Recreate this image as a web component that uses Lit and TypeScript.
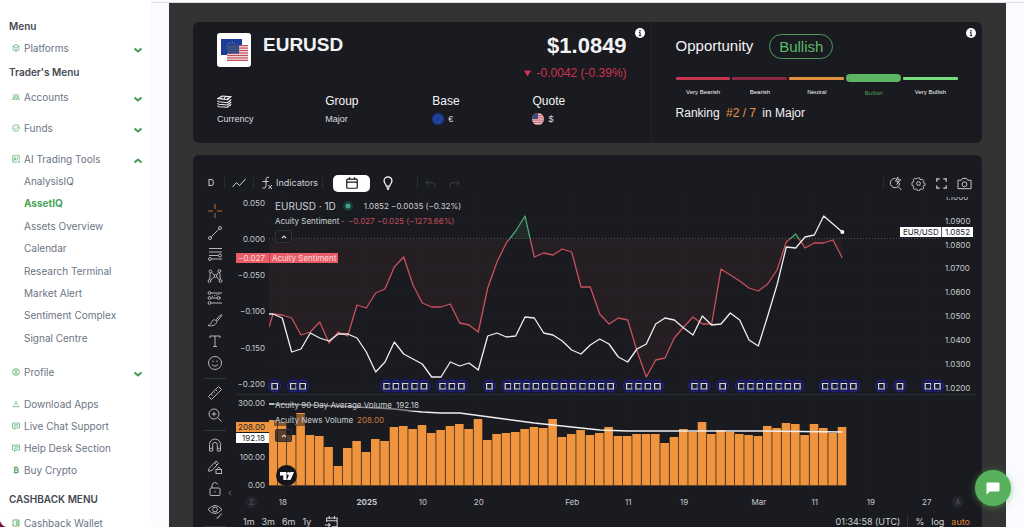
import { LitElement, html, svg, css, nothing } from "lit";
import { customElement } from "lit/decorators.js";
import { classMap } from "lit/directives/class-map.js";

/* ---------- icons ---------- */

const icon = (body: unknown, box = "0 0 16 16", cls = "ic") =>
  html`<svg class=${cls} viewBox=${box} aria-hidden="true">${body}</svg>`;

const menuIcons: Record<string, unknown> = {
  cube: svg`<path d="M8 1.200 14 4.500v7L8 14.800 2 11.500v-7zM2.500 4.800 8 8l5.500-3.200M8 8v6.500"/>`,
  people: svg`<circle cx="5" cy="5" r="2.200"/><circle cx="11" cy="5" r="2.200"/><path d="M1 12.500V11q0-2 4-2t4 2v1.500zM10 9q5-.5 5 2v1.500H9"/>`,
  check: svg`<circle cx="8" cy="8" r="6.600"/><path d="m4.800 8.300 2.300 2.300 5-5.400"/>`,
  ai: svg`<path d="M14.500 9V1.500h-13v13H10M4 11l1.800-6 1.800 6M4.600 9.200h2.500M10.500 5v6M12 13.500h4M14 11.500v4"/>`,
  user: svg`<circle cx="8" cy="8" r="6.800"/><circle cx="8" cy="6.300" r="2.500"/><path d="M3.500 12.800q4.500-4.600 9 0"/>`,
  download: svg`<path d="M8 2v7M5 6.500 8 9.500l3-3M2 10.500v3h12v-3"/>`,
  chat: svg`<path d="M1 2h14v10H8l-3 2.600V12H1zM4 5.500h8M4 8.500h5M10 8.500l3-2"/>`,
  bitcoin: svg`<path d="M3.500 3H9q3 0 3 2.400T9 7.900H5.500 9.500q3.200 0 3.200 2.600T9.500 13H3.500M5.500 3v10M6.500 1v2M9 1v2M6.500 13v2.200M9 13v2.200" stroke-width="2.400"/>`,
  wallet: svg`<path d="M2 2h12v12H2zM14 5.500H8.500v5H14M10.500 8h1.200" stroke-width="1.800"/>`,
};

const toolIcons: Record<string, unknown> = {
  cross: svg`<path d="M8 1v5M8 10v5M1 8h5M10 8h5" stroke="#c06a35"/>`,
  trend: svg`<circle cx="3" cy="13" r="1.500"/><circle cx="13" cy="3" r="1.500"/><path d="m4.200 11.800 7.600-7.600"/>`,
  fib: svg`<path d="M2 2.500h13M2 6h13M2 9.500h9.500M4.500 13H15"/><circle cx="13" cy="9.500" r="1.500"/><circle cx="3" cy="13" r="1.500"/>`,
  pattern: svg`<circle cx="3.500" cy="3.500" r="1.400"/><circle cx="12.500" cy="3" r="1.400"/><circle cx="8.500" cy="8" r="1.400"/><circle cx="2.500" cy="13" r="1.400"/><circle cx="13.500" cy="13" r="1.400"/><path d="m3.300 5-.6 6.500M4.700 4.400l2.700 2.700M9.500 7l2-2.800M12.700 4.500l.6 7M7.300 9l-3.800 3M9.600 9l3 3"/>`,
  forecast: svg`<circle cx="2.500" cy="3" r="1.400"/><circle cx="2.500" cy="8" r="1.400"/><circle cx="2.500" cy="13" r="1.400"/><circle cx="11.500" cy="8" r="1.400"/><path d="M4 3h11M4 8h6M4 13h11"/><path d="m5 6.500 8-2.500M13 8h2" stroke-dasharray="1 1"/>`,
  brush: svg`<path d="M15 2.500Q11.500 4 9.500 7.500M1 13.500c3 .8 7.500.3 8.500-3 .4-1.800-1.300-3.300-3.200-2.500C4 9.200 5.200 12 1 13.500zM9 7.500l1.500 1.300L15 3.500"/>`,
  text: svg`<path d="M3 5V3h10v2M8 3v10.500M6 13.500h4"/>`,
  smile: svg`<circle cx="8" cy="8" r="6.500"/><path d="M5 9.500q3 3.200 6 0"/><path d="M6 5.800v1M10 5.800v1" stroke-width="1.400"/>`,
  ruler: svg`<path d="M1.500 11.500 11.500 1.500l3 3-10 10zM4.200 9l1.500 1.500M6.500 6.700l1 1M8.500 4.600 10 6.100"/>`,
  zoomIn: svg`<circle cx="7" cy="7" r="5"/><path d="m10.800 10.800 3.700 3.700M7 4.700v4.600M4.700 7h4.600"/>`,
  magnet: svg`<path d="M2.500 14V7.500a5.500 5.500 0 0 1 11 0V14h-3.200V7.700a2.300 2.300 0 0 0-4.600 0V14zM2.500 11.300h3.200M10.300 11.300h3.200"/>`,
  pencilLock: svg`<path d="m2 9.500 7-7.500 2.500 2.300L5 11.500l-3.500.7zM7.500 3.600 10 6"/><rect x="9" y="10.500" width="5.500" height="4"/><path d="M10.300 10.500v-1.200q1.500-2 3 0v1.200"/>`,
  lock: svg`<rect x="3" y="7" width="10" height="7.500" rx="1"/><path d="M5 7V4.500a3 3 0 0 1 5.800-1M8 10v1.500"/>`,
  eye: svg`<path d="M1 6.500q7-8 14 0-7 8-14 0z"/><circle cx="8" cy="6.500" r="2.400"/><path d="M15 10.500 12 13M9.500 15q2.500.5 2.700-2"/>`,
};

const chevron = (up = false) =>
  icon(svg`<path d=${up ? "M1.500 6.500 5 3.500l3.500 3" : "M1.500 3.500 5 6.500l3.500-3"}/>`, "0 0 10 10", "chev");

/* ---------- data ---------- */

type Item = { label: string; icon: string; gap?: boolean; open?: boolean; toggles?: boolean };

const traderMenu: Item[] = [
  { label: "Accounts", icon: "people", toggles: true, gap: true },
  { label: "Funds", icon: "check", toggles: true, gap: true },
  { label: "AI Trading Tools", icon: "ai", toggles: true, open: true },
];
const aiTools = [
  "AnalysisIQ", "AssetIQ", "Assets Overview", "Calendar",
  "Research Terminal", "Market Alert", "Sentiment Complex", "Signal Centre",
];
const profileMenu: Item[] = [{ label: "Profile", icon: "user", toggles: true }];
const supportMenu: Item[] = [
  { label: "Download Apps", icon: "download" },
  { label: "Live Chat Support", icon: "chat" },
  { label: "Help Desk Section", icon: "chat" },
  { label: "Buy Crypto", icon: "bitcoin" },
];

const STEP = 28 / 3;
const X0 = 37;
const x = (i: number) => X0 + i * STEP;
const BASE = 485;
const ZERO = 239;

const volume = [
  420, 422, 435, 413, 435, 436, 447, 466, 448, 441, 452, 439, 441, 427, 426, 429, 425, 433, 430, 426, 424,
  429, 419, 440, 434, 433, 432, 429, 427, 428, 419, 437, 434, 430, 435, 433, 427, 436, 436, 434, 434, 434,
  443, 437, 429, 432, 422, 434, 430, 432, 434, 435, 436, 426, 428, 423, 424, 435, 424, 428, 433, 427,
];
const sentiment = [
  314, 315, 318, 335, 332, 322, 343, 332, 336, 305, 308, 293, 289, 267, 257, 285, 303, 307, 307, 304, 323,
  325, 332, 288, 262, 243, 231, 216, 257, 253, 255, 249, 252, 287, 287, 314, 324, 318, 320, 351, 377, 360,
  358, 338, 327, 317, 324, 324, 269, 275, 281, 288, 291, 284, 270, 242, 234, 248, 243, 243, 240, 258,
];
const price = [
  314, 318, 352, 349, 333, 338, 341, 334, 334, 338, 352, 372, 362, 342, 354, 359, 364, 377, 377, 362, 366,
  363, 370, 336, 333, 337, 336, 317, 318, 333, 335, 341, 350, 354, 345, 339, 344, 357, 362, 349, 344, 324,
  318, 320, 328, 335, 316, 325, 324, 313, 320, 340, 346, 316, 285, 247, 248, 237, 235, 216, 224, 232,
];
const average: [number, number][] = [
  [0, 404], [4, 405], [9, 407], [13, 409], [16, 412], [18, 413], [20, 413], [24, 418], [28, 423], [32, 427],
  [35, 430], [38, 431], [52, 431], [61, 432],
];
const events = [
  0, 2, 3, 12, 13, 14, 15, 16, 18, 19, 20, 23, 25, 26, 27, 28, 29, 30, 31, 32, 33, 34, 35, 36, 38, 39, 40,
  41, 45, 46, 48, 50, 51, 52, 53, 54, 55, 56, 59, 60, 61, 62, 65, 67, 70, 71,
];
const leftTicks: [string, number][] = [
  ["0.050", 203], ["0.000", 239], ["−0.050", 275], ["−0.100", 311], ["−0.150", 348], ["−0.200", 384],
  ["300.00", 403], ["100.00", 457], ["0.00", 485],
];
const rightTicks: [string, number][] = [
  ["1.1000", 197], ["1.0900", 221], ["1.0800", 245], ["1.0700", 268], ["1.0600", 292], ["1.0500", 316],
  ["1.0400", 340], ["1.0300", 364], ["1.0200", 388],
];
const dates: [string, number][] = [
  ["18", 1], ["2025", 10], ["10", 16], ["20", 22], ["Feb", 32], ["11", 38], ["19", 44], ["Mar", 52],
  ["11", 58], ["19", 64], ["27", 70],
];

const pts = (ys: number[]) => ys.map((y, i) => `${x(i).toFixed(1)},${y}`).join(" ");

/* ---------- sidebar ---------- */

@customElement("side-nav")
class SideNav extends LitElement {
  static styles = css`
    :host { display: block; width: 151px; flex: none; background: #fff; font: 10px/22px Inter, "Open Sans", sans-serif; color: #6b7583; overflow: hidden; }
    nav { padding-top: 15px; }
    h2 { margin: 0; padding-left: 9px; font-size: 10px; line-height: 22px; font-weight: 600; color: #43484f; }
    .mid { line-height: 27px; }
    .last { line-height: 26px; margin-top: 5px; }
    ul { list-style: none; margin: 0; padding: 0; }
    .row { display: flex; align-items: center; gap: 4px; height: 22px; width: 100%; padding: 0 8px 0 12px; box-sizing: border-box; border: 0; background: none; font: inherit; color: inherit; text-align: left; text-decoration: none; white-space: nowrap; cursor: pointer; }
    .row span { flex: 1; }
    .gap { margin-bottom: 9px; }
    .ic { width: 8px; height: 8px; flex: none; fill: none; stroke: #58ac68; stroke-width: 1.5; }
    .chev { width: 10px; height: 10px; padding-top: 3px; flex: none; fill: none; stroke: #3f9c52; stroke-width: 2; }
    .sub { display: grid; grid-auto-rows: 1fr; height: 179px; margin-bottom: 12px; }
    .sub a { padding-left: 24px; color: inherit; text-decoration: none; }
    .sub .on { color: #4aa55a; font-weight: 700; }
    .support { margin-top: 10px; }
  `;
  row(it: Item) {
    const body = html`${icon(menuIcons[it.icon])}<span>${it.label}</span>${it.toggles ? chevron(it.open) : nothing}`;
    return html`<li class=${classMap({ gap: !!it.gap })}>
      ${it.toggles
        ? html`<button class="row" aria-expanded=${it.open ? "true" : "false"}>${body}</button>`
        : html`<a class="row" href="#">${body}</a>`}
    </li>`;
  }
  render() {
    return html`<nav>
      <h2>Menu</h2>
      <ul>${this.row({ label: "Platforms", icon: "cube", toggles: true })}</ul>
      <h2 class="mid">Trader's Menu</h2>
      <ul>${traderMenu.map((i) => this.row(i))}</ul>
      <ul class="sub">
        ${aiTools.map((t) => html`<li><a href="#" class=${classMap({ on: t === "AssetIQ" })}>${t}</a></li>`)}
      </ul>
      <ul>${profileMenu.map((i) => this.row(i))}</ul>
      <ul class="support">${supportMenu.map((i) => this.row(i))}</ul>
      <h2 class="last">CASHBACK MENU</h2>
      <ul>${this.row({ label: "Cashback Wallet", icon: "wallet" })}</ul>
    </nav>`;
  }
}

/* ---------- asset summary ---------- */

const stripes = (w: number, h: number) =>
  [0, 1, 2, 3, 4, 5, 6].map((i) => svg`<rect y=${(i * 2 * h) / 13} width=${w} height=${h / 13} fill="#c4505c"/>`);

@customElement("asset-card")
class AssetCard extends LitElement {
  static styles = css`
    :host { display: block; }
    .card { display: grid; grid-template-columns: 58fr 42fr; background: #1a1b20; border-radius: 6px; color: #f3f3f5; font: 12px/18px "Liberation Sans", Arial, sans-serif; }
    section { position: relative; padding: 11px 24px 15px; }
    .opp { border-left: 1px solid #25262c; }
    .info { position: absolute; top: 6px; right: 6px; width: 10px; height: 10px; padding: 0; border: 0; background: none; }
    .info svg { display: block; width: 10px; height: 10px; }
    .top { display: flex; gap: 12px; height: 59px; }
    .tile { width: 34px; height: 34px; flex: none; }
    h1 { margin: 0; flex: 1; font-size: 19px; line-height: 24px; }
    .quote { text-align: right; }
    .price { font-size: 22px; line-height: 26px; font-weight: 700; }
    .chg { margin-top: 5px; color: #cf3350; display: flex; align-items: center; justify-content: flex-end; gap: 6px; }
    .chg svg { width: 7px; height: 7px; }
    dl { display: grid; grid-template-columns: 108fr 107fr 100fr 94fr; margin: 0; }
    dt, dd { margin: 0; height: 18px; display: flex; align-items: center; gap: 4px; }
    dd { font-size: 9px; color: #dcdce0; }
    .layers { width: 15px; height: 13px; }
    .flag { width: 12px; height: 12px; }
    .head { display: flex; align-items: center; gap: 16px; font-size: 15px; height: 26px; }
    .pill { border: 1px solid #4d9a5b; color: #5cb968; border-radius: 13px; padding: 0 9px; line-height: 23px; }
    .scale { list-style: none; display: grid; grid-template-columns: repeat(5, 1fr); gap: 2px; margin: 14px 0 0; padding: 0; height: 29px; font-size: 6px; line-height: 8px; text-align: center; }
    .bar { display: block; height: 3px; margin: 4px 0 8px; border-radius: 1px; }
    .active { color: #4f9f58; }
    .active .bar { height: 8px; margin: 1px 0 7px; border-radius: 4px; }
    .b0 { background: #c73550; } .b1 { background: #8c2742; } .b2 { background: #e0913f; } .b3 { background: #5cb562; } .b4 { background: #76df7d; }
    .rank { margin: 0; line-height: 22px; }
    .rank b { color: #e8954a; font-weight: 400; margin: 0 3px; }
  `;
  info() {
    return html`<button class="info" aria-label="More information">
      <svg viewBox="0 0 20 20"><circle cx="10" cy="10" r="10" fill="#fff" /><circle cx="10" cy="5.500" r="1.700" fill="#1a1b20" /><path d="M8 9h2.200v6M7.500 15.200h5" fill="none" stroke="#1a1b20" stroke-width="2" /></svg>
    </button>`;
  }
  render() {
    const levels = ["Very Bearish", "Bearish", "Neutral", "Bullish", "Very Bullish"];
    return html`<div class="card">
      <section>
        ${this.info()}
        <div class="top">
          <svg class="tile" viewBox="0 0 34 34">
            <rect width="34" height="34" rx="3" fill="#fff" />
            <rect x="4" y="6" width="21" height="16" fill="#1c3c9c" />
            <circle cx="14.500" cy="14" r="4.500" fill="none" stroke="#b9b45c" stroke-width=".9" stroke-dasharray=".9 1.460" />
            <g transform="translate(10 12)"><rect width="21" height="16" fill="#f1e4e6" />${stripes(21, 16)}<rect width="12" height="8.600" fill="#33487f" />
            <path d="M1 2h10M1 4.300h10M1 6.600h10" stroke="#8290b3" stroke-width=".6" stroke-dasharray=".7 1.100" /></g>
          </svg>
          <h1>EURUSD</h1>
          <div class="quote">
            <div class="price">$1.0849</div>
            <div class="chg"><svg viewBox="0 0 7 7"><path d="M0 .5h7L3.500 6.500z" fill="#cf3350" /></svg>-0.0042 (-0.39%)</div>
          </div>
        </div>
        <dl>
          <div>
            <dt><svg class="layers" viewBox="0 0 15 13" fill="none" stroke="#f0f0f2" stroke-width="1.100"><path d="M1 3.500 5 1l9 .7-3.500 3zM4 3.800l1.500-1M7 4l1.500-2.600M10 4.300l1.600-1.900M.8 5.500q0 1 1 1.200l8.600 1L14.200 4.500M.8 8q0 1 1 1.200l8.600.8 3.800-3M.8 10.500q0 1 1 1.200l8.600.6 3.800-3" /></svg></dt>
            <dd>Currency</dd>
          </div>
          <div><dt>Group</dt><dd>Major</dd></div>
          <div>
            <dt>Base</dt>
            <dd><svg class="flag" viewBox="0 0 12 12"><circle cx="6" cy="6" r="6" fill="#1b3c95" /><circle cx="6" cy="6" r="3.300" fill="none" stroke="#5f7390" stroke-width=".7" stroke-dasharray=".8 .93" /></svg>€</dd>
          </div>
          <div>
            <dt>Quote</dt>
            <dd><svg class="flag" viewBox="0 0 12 12"><clipPath id="c"><circle cx="6" cy="6" r="6" /></clipPath><g clip-path="url(#c)"><rect width="12" height="12" fill="#eedfe2" />${stripes(12, 12)}<rect width="6" height="6" fill="#3c4a7c" /></g></svg>$</dd>
          </div>
        </dl>
      </section>
      <section class="opp">
        ${this.info()}
        <div class="head">Opportunity <span class="pill">Bullish</span></div>
        <ul class="scale">
          ${levels.map((l, i) => html`<li class=${classMap({ active: i === 3 })}><span class="bar b${i}"></span>${l}</li>`)}
        </ul>
        <p class="rank">Ranking <b>#2 / 7</b> in Major</p>
      </section>
    </div>`;
  }
}

/* ---------- chart ---------- */

@customElement("price-chart")
class PriceChart extends LitElement {
  static styles = css`
    :host { display: block; background: #1a1b20; border-radius: 6px 6px 0 0; color: #cfd1d6; font: 9px/12px Inter, Roboto, sans-serif; padding-top: 17px; }
    button { border: 0; background: none; color: inherit; font: inherit; padding: 0; display: grid; place-items: center; cursor: pointer; }
    .ic { width: 16px; height: 16px; fill: none; stroke: currentColor; stroke-width: 1; }
    .bar { display: flex; align-items: center; height: 22px; padding: 0 6px 0 10px; }
    .bar i { width: 1px; height: 12px; background: #2b2d34; }
    .d { width: 16px; margin-right: 5px; }
    .style { width: 28px; }
    .ind { display: flex; align-items: center; gap: 1px; margin: 0 4px 0 5px; }
    .cal { width: 37px; height: 17px; margin: 0 9px 0 10px; background: #fff; color: #1a1b20; border-radius: 5px; }
    .cal .ic, .bulb .ic { width: 14px; height: 14px; stroke-width: 1.4; }
    .bulb { width: 18px; margin-right: 20px; color: #fff; }
    .dim { width: 23px; margin-left: 1px; color: #44464e; }
    .dim .ic { width: 13px; height: 13px; }
    .fill { flex: 1; }
    .act { width: 23px; }
    .act .ic { width: 15px; height: 15px; }
    .body { display: grid; grid-template-columns: 43px minmax(0, 1fr); padding-right: 6px; }
    .tools { padding: 6px 0 0 11px; width: 22px; color: #b3b5bb; position: relative; }
    .group { display: grid; grid-auto-rows: 22px; }
    .tools hr { height: 1px; border: 0; background: #33353c; margin: 4px 0 3px; }
    .first { grid-auto-rows: 1fr; height: 174px; }
    .fold { position: absolute; left: 34px; top: 293px; width: 6px; height: 12px; color: #8a8c93; }
    .fold .ic { width: 4px; height: 6px; }
    .plot { position: relative; }
    .canvas { display: block; width: 100%; }
    .canvas text { font-size: 8px; fill: #c6c8cd; }
    .canvas .end { text-anchor: end; }
    .canvas .midd { text-anchor: middle; }
    .canvas .bold { font-weight: 700; }
    .canvas .faint { fill: #5a5c64; font-size: 7px; }
    .canvas .dark { fill: #24262c; }
    .canvas .light { fill: #fbdcdc; }
    .legend { position: absolute; left: 38px; display: grid; justify-items: start; gap: 3px; font-size: 8px; }
    .legend div { display: flex; align-items: center; gap: 4px; white-space: nowrap; background: rgba(26, 27, 32, 0.5); padding-left: 1px; }
    .l1 { top: 6px; } .l2 { top: 205px; }
    .legend .sym { font-size: 10px; gap: 7px; height: 12px; }
    .sym small { font-size: 8px; margin-left: 4px; }
    .dot { width: 10px; height: 10px; }
    .red { color: #c34e5c; } .orange { color: #ca7e35; }
    .legend button { width: 17px; height: 13px; margin-left: 1px; border: 1px solid #303239; border-radius: 2px; background: rgba(26, 27, 32, 0.7); }
    .legend button .ic { width: 8px; height: 8px; }
    .foot { display: flex; align-items: center; gap: 7px; padding: 0 6px 0 7px; height: 16px; font-size: 9px; color: #d0d2d6; }
    .foot .ic { width: 14px; height: 14px; }
    .foot .go { margin-left: 6px; }
    .foot .auto { color: #d98336; }
    .foot i { width: 1px; height: 12px; background: #33353c; }
  `;

  tool(name: string) {
    return html`<button aria-label=${name}>${icon(toolIcons[name])}</button>`;
  }

  plot() {
    const line = `33,327 ${pts(sentiment)}`;
    const last = x(61);
    return html`<svg class="canvas" viewBox="0 194 740 320">
      <clipPath id="up"><rect x="33" y="194" width="672" height="45" /></clipPath>
      <clipPath id="down"><rect x="33" y="239" width="672" height="155" /></clipPath>
      <clipPath id="axis"><rect x="700" y="197" width="40" height="200" /></clipPath>
      ${dates.map(([, i]) => svg`<path d="M${x(i)} 196V490" stroke="#1e1f25"/>`)}
      ${rightTicks.slice(1).map(([, y]) => svg`<path d="M33 ${y}H705" stroke="#1d1e24"/>`)}
      <polygon points="33,239 ${line} ${last},239" fill="#e0505a" opacity=".06" clip-path="url(#down)" />
      <polygon points="33,239 ${line} ${last},239" fill="#3fa66b" opacity=".12" clip-path="url(#up)" />
      <path d="M33 ${ZERO - 0.5}H705" stroke="#50525a" stroke-dasharray="1 2" />
      <g fill="none" stroke-linejoin="round">
        <polyline points=${line} stroke="#c9505c" stroke-width="1.300" clip-path="url(#down)" />
        <polyline points=${line} stroke="#4fa574" stroke-width="1.300" clip-path="url(#up)" />
        <polyline points="33,314 ${pts(price)}" stroke="#eeeef0" stroke-width="1.300" />
      </g>
      <circle cx=${last} cy="232" r="2" fill="#fff" />
      ${events.map(
        (i) => svg`<g transform="translate(${(x(i) + 1.7).toFixed(1)} 386)"><circle r="6.800" fill="#15164a"/><circle r="5.900" fill="#191a30" stroke="#20229a" stroke-width="1.100"/>
          <path d="M-2.800-2.500H2.700V3H-2.800z" fill="none" stroke="#d9dade" stroke-width="1.200"/></g>`
      )}
      <path d="M0 394.500H740" stroke="#2a2c33" />
      ${volume.map((y, i) => {
        const left = i ? x(i) - STEP / 2 : 33;
        return svg`<rect x=${left.toFixed(1)} y=${y} width=${(x(i) + STEP / 2 - left - 0.7).toFixed(1)} height=${BASE - y} fill="#f0953d"/>`;
      })}
      <path d="M33 485.500H610" stroke="#5f4427" />
      <polyline points=${"33,404 " + average.map(([i, y]) => `${x(i).toFixed(1)},${y}`).join(" ")} fill="none" stroke="#eeeef0" stroke-width="1.400" />
      ${leftTicks.map(([t, y]) => svg`<text class="end" x="29" y=${y + 3}>${t}</text>`)}
      <g clip-path="url(#axis)">${rightTicks.map(([t, y]) => svg`<text x="709" y=${y + 3}>${t}</text>`)}</g>
      <rect y="253" width="102" height="10" fill="#e85c68" /><path d="M33.500 253v10" stroke="#b9434f" />
      <text class="end light" x="29" y="261">−0.027</text><text class="light" x="36" y="261">Acuity Sentiment</text>
      <rect y="422" width="33" height="10" fill="#f0953d" /><text class="end dark" x="29" y="430">208.00</text>
      <rect y="433" width="33" height="10" fill="#fff" /><text class="end dark" x="29" y="441">192.18</text>
      <rect x="664" y="227" width="73" height="10" fill="#fff" /><path d="M705.500 227v10" stroke="#55575e" />
      <text class="dark" x="667" y="235">EUR/USD</text><text class="dark" x="709" y="235">1.0852</text>
      <circle cx="50.500" cy="475.500" r="10.500" fill="#14151c" />
      <path d="M44 472h6.500v8H47.300v-4.500H44zM58 472h-3.600l-3.500 8h3.600z" fill="#fff" /><circle cx="52.600" cy="473.600" r="1.600" fill="#fff" />
      ${dates.map(([t, i]) => svg`<text class="midd ${t === "2025" ? "bold" : ""}" x=${(x(i) + 0.5).toFixed(1)} y="505">${t}</text>`)}
      <circle cx="15.500" cy="502" r="6" fill="#24252c" /><text class="midd faint" x="15.500" y="504.500">Z</text>
      <circle cx="722" cy="502" r="6" fill="#24252c" /><text class="midd faint" x="722" y="504.500">A</text>
    </svg>`;
  }

  render() {
    const fold = html`<button aria-label="Collapse legend">${icon(svg`<path d="m2 5 2-2 2 2" stroke-width="1.200"/>`, "0 0 8 8")}</button>`;
    return html`
      <div class="bar">
        <button class="d">D</button>
        <i></i>
        <button class="style" aria-label="Chart style">${icon(svg`<path d="m1.500 12 4-4.500 3 3L14.500 4"/>`)}</button>
        <i></i>
        <button class="ind">${icon(svg`<path d="M10 2.500C7.500 1.500 7 3 7 5v5.500c0 2.500-1.500 3-3.500 2.500M3.500 6.500h6M9.500 10l3.500 4M13 10l-3.500 4"/>`)}Indicators</button>
        <i></i>
        <button class="cal" aria-label="Events">${icon(svg`<rect x="2" y="3.500" width="12" height="10.500" rx="1"/><path d="M2 7h12M5 1.500v3M11 1.500v3"/>`)}</button>
        <button class="bulb" aria-label="Ideas">${icon(svg`<path d="M6 11.500C6 9.500 3.500 8.500 3.500 5.500a4.500 4.500 0 0 1 9 0c0 3-2.500 4-2.500 6zM6.300 13.500h3.400M7 15.300h2"/>`)}</button>
        <i></i>
        <button class="dim" aria-label="Undo">${icon(svg`<path d="M5.500 4 2.500 7l3 3M2.500 7H10q4 0 4 4v1.500"/>`)}</button>
        <button class="dim" aria-label="Redo">${icon(svg`<path d="m10.500 4 3 3-3 3M13.500 7H6q-4 0-4 4v1.500"/>`)}</button>
        <span class="fill"></span>
        <i></i>
        <button class="act" aria-label="Quick search">${icon(svg`<path d="M8 2.500a5 5 0 1 0 4.500 5M11 11.500l3.500 3.500M10.500 1 8 5.500h3L9.500 9 13.500 4h-3z"/>`)}</button>
        <button class="act" aria-label="Settings">${icon(svg`<circle cx="8" cy="8" r="2"/><path d="M6.700 1.500h2.600l.4 1.700 1.300.5 1.500-.9 1.800 1.800-.9 1.500.5 1.200 1.700.4v2.600l-1.700.4-.5 1.200.9 1.500-1.800 1.800-1.500-.9-1.300.5-.4 1.700H6.700l-.4-1.700-1.300-.5-1.500.9-1.800-1.800.9-1.500-.5-1.200-1.700-.4V6.700l1.700-.4.5-1.200-.9-1.500 1.800-1.800 1.500.9 1.300-.5z" transform="translate(.7 .7) scale(.91)"/>`)}</button>
        <button class="act" aria-label="Fullscreen">${icon(svg`<path d="M3 6V3h3M10 3h3v3M13 10v3h-3M6 13H3v-3" stroke-width="1.300"/>`)}</button>
        <button class="act" aria-label="Snapshot">${icon(svg`<path d="M1 4.500h3.500l1.500-2h4l1.500 2H15v9H1z"/><circle cx="8" cy="8.800" r="2.600"/>`)}</button>
      </div>
      <div class="body">
        <div class="tools">
          <div class="group first">${["cross", "trend", "fib", "pattern", "forecast", "brush", "text", "smile"].map((t) => this.tool(t))}</div>
          <hr />
          <div class="group">${["ruler", "zoomIn"].map((t) => this.tool(t))}</div>
          <hr />
          <div class="group">${["magnet", "pencilLock", "lock", "eye"].map((t) => this.tool(t))}</div>
          <hr />
          <button class="fold" aria-label="Hide tools">${icon(svg`<path d="M4 1 1 4l3 3"/>`, "0 0 5 8")}</button>
        </div>
        <div>
          <div class="plot">
            ${this.plot()}
            <div class="legend l1">
              <div class="sym">EURUSD · 1D <svg class="dot" viewBox="0 0 10 10"><circle cx="5" cy="5" r="5" fill="#1d3c38" /><circle cx="5" cy="5" r="2.500" fill="#41a28b" /></svg><small>1.0852 −0.0035 (−0.32%)</small></div>
              <div>Acuity Sentiment · <span class="red">−0.027 −0.025 (−1273.66%)</span></div>
              ${fold}
            </div>
            <div class="legend l2">
              <div>Acuity 90 Day Average Volume <span>192.18</span></div>
              <div>Acuity News Volume <span class="orange">208.00</span></div>
              ${fold}
            </div>
          </div>
          <div class="foot">
            <button>1m</button><button>3m</button><button>6m</button><button>1y</button>
            <button class="go" aria-label="Go to date">${icon(svg`<path d="M3 8V3.500h12v10H9M3 6.500h12M6 1v3.500M12 1v3.500M1 11.500h6M5 9.500l2 2-2 2" stroke-width="1.200"/>`)}</button>
            <span class="fill"></span>
            <span>01:34:58 (UTC)</span><i></i>
            <button>%</button><button>log</button><button class="auto">auto</button>
          </div>
        </div>
      </div>`;
  }
}

/* ---------- page ---------- */

@customElement("app-root")
class AppRoot extends LitElement {
  static styles = css`
    :host { display: block; background: #7d1236; }
    .shell { display: flex; height: 100vh; overflow: hidden; background: #fafaff; border-bottom-left-radius: 8px; }
    main { flex: 1; min-width: 0; padding: 0 18px; border-top: 2px solid #fafaff; }
    .frame { border-top: 1px solid #dcdce4; margin: 0 -18px; padding: 0 18px; }
    .panel { background: #333; padding: 19px 24px 0; min-height: 100vh; display: grid; gap: 12px; align-content: start; }
    .chat { position: fixed; right: 13px; bottom: 21px; width: 36px; height: 36px; border: 0; padding: 0; border-radius: 50%; background: #57b05b; box-shadow: 0 1px 6px rgba(87, 176, 91, 0.6); display: grid; place-items: center; }
    .chat svg { width: 14px; height: 14px; display: block; }
  `;
  render() {
    return html`<div class="shell">
      <side-nav></side-nav>
      <main>
        <div class="frame">
          <div class="panel">
            <asset-card></asset-card>
            <price-chart></price-chart>
          </div>
        </div>
      </main>
      <button class="chat" aria-label="Open chat">
        <svg viewBox="0 0 14 14"><path d="M1.500 1.500h11q1 0 1 1v7q0 1-1 1H4l-3.500 3v-11q0-1 1-1z" fill="#fff" /></svg>
      </button>
    </div>`;
  }
}
